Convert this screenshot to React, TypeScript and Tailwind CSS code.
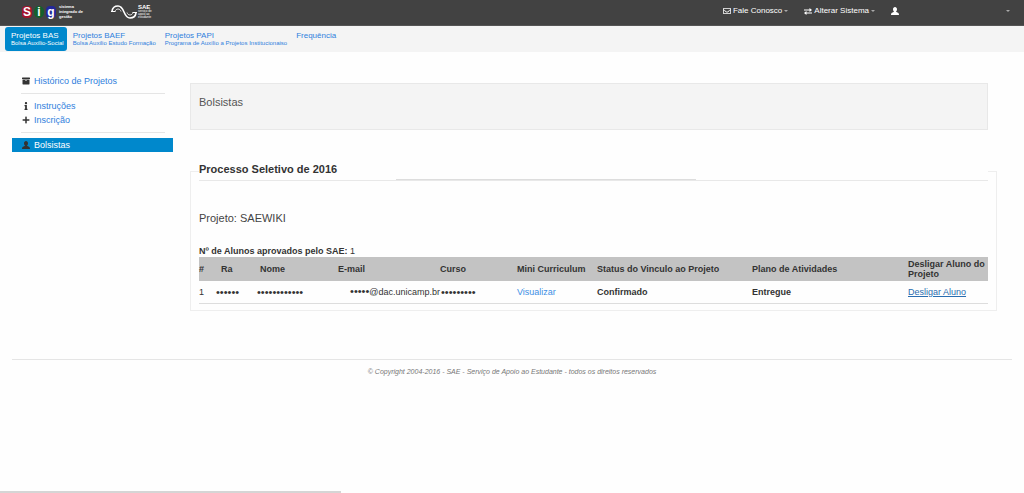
import type { ReactNode } from 'react';
import { FaArchive, FaInfo, FaPlus, FaRegEnvelope } from 'react-icons/fa';

const projetos = [
    { nome: 'Projetos BAS', detalhe: 'Bolsa Auxílio-Social', ativo: true },
    { nome: 'Projetos BAEF', detalhe: 'Bolsa Auxilio Estudo Formação' },
    { nome: 'Projetos PAPI', detalhe: 'Programa de Auxílio a Projetos Institucionaiso' },
    { nome: 'Frequência', detalhe: '' },
];

function LogoSig() {
    return (
        <a href="#" className="flex items-center gap-[3px]" aria-label="Sistema integrado de gestão">
            <span className="flex items-center gap-[2px] text-[12px] leading-[12px] font-bold">
                <span className="w-[10px] rounded-[4px] bg-[#a3152c] text-center">S</span>
                <span className="w-[10px] rounded-[5px] bg-[#14602c] text-center">i</span>
                <span className="w-[10px] rounded-[4px] bg-[#23289a] text-center">g</span>
            </span>
            <span className="text-[4px] leading-[5px] font-bold">
                sistema<br />integrado de<br />gestão
            </span>
        </a>
    );
}

function LogoSae() {
    return (
        <a href="#" className="flex items-center gap-px" aria-label="SAE">
            <svg viewBox="0 0 26 14" className="h-[14px] w-[26px]" fill="none" stroke="white">
                <path d="M1 6C1.500 3 4 1 7 1c7 0 5 12 12 12 3 0 5.500-2 6-5" strokeWidth="1.6" />
                <path d="M4 6.500c.5-1.500 1.500-2.500 3-2.500s2.500 1 3 2.500M16 7.500c.5 1.500 1.500 2.500 3 2.500s2.500-1 3-2.500" strokeWidth="0.8" />
                <path d="M0 6.500h4.500M21.500 7.500H26" strokeWidth="1" />
            </svg>
            <span className="text-[3px] leading-[3px]">
                <span className="block text-[6px] leading-[6px] font-bold">SAE</span>
                serviço de<br />apoio ao<br />estudante
            </span>
        </a>
    );
}

function IconeUsuario() {
    return (
        <svg viewBox="0 0 14 14" className="size-2" fill="currentColor">
            <path d="M7 0c2 0 3.500 1.600 3.500 4 0 1.800-.8 3.300-1.900 4 .3.900 1.200 1.200 2.600 1.600 1.700.5 2.800 1.400 2.800 4.400H0c0-3 1.100-3.900 2.800-4.400C4.200 9.200 5.100 8.900 5.400 8 4.300 7.300 3.500 5.800 3.500 4 3.500 1.600 5 0 7 0z" />
        </svg>
    );
}

function IconeTroca() {
    return (
        <svg viewBox="0 0 16 14" className="h-[7px] w-2" fill="currentColor">
            <path d="M0 3h11V0l5 4.200-5 4V5.200H0zM16 11.200H5V14L0 10l5-4v3h11z" />
        </svg>
    );
}

function ItemMenu({ icone, children }: { icone: ReactNode; children?: ReactNode }) {
    return (
        <button type="button" className="flex items-center gap-[2px] text-[8px] leading-[10px]">
            {icone}
            {children}
        </button>
    );
}

function Seta() {
    return (
        <svg viewBox="0 0 4 2" className="h-[2px] w-1 fill-[#aaaaaa]">
            <path d="M0 0h4L2 2z" />
        </svg>
    );
}

function LinkLateral({ icone, children, ativo }: { icone: ReactNode; children: ReactNode; ativo?: boolean }) {
    return (
        <a
            href="#"
            className={`flex h-[14px] items-center gap-1 pl-[10px] text-[9px] ${ativo ? 'bg-[#0088cc] text-white' : 'text-[#2f80dd]'}`}
        >
            <span className="flex w-2 justify-center text-[8px] text-[#333333]">{icone}</span>
            {children}
        </a>
    );
}

export default function App() {
    return (
        <div className="flex min-h-screen flex-col bg-[#fefefe] font-['Liberation_Sans',Arial,sans-serif] text-[9px] leading-[10px] text-[#333333]">
            <header className="flex h-[26px] items-start border-b border-[#555555] bg-[#424242] pt-1 pr-[14px] pl-[22px] text-white">
                <div className="flex items-center gap-7">
                    <LogoSig />
                    <LogoSae />
                </div>
                <div className="ml-auto flex h-[14px] items-center gap-4">
                    <ItemMenu icone={<FaRegEnvelope />}>Fale Conosco<Seta /></ItemMenu>
                    <ItemMenu icone={<IconeTroca />}>Alterar Sistema<Seta /></ItemMenu>
                    <button type="button" aria-label="Usuário" className="flex w-[119px] items-center justify-between">
                        <IconeUsuario />
                        <Seta />
                    </button>
                </div>
            </header>

            <nav className="flex h-[26px] items-start bg-[#f4f4f4] pt-px pl-[5px]">
                {projetos.map((p) => (
                    <a
                        key={p.nome}
                        href="#"
                        className={`h-6 rounded-[3px] pt-1 pr-[3px] pl-[6px] text-[8px] leading-[9px] whitespace-nowrap ${p.ativo ? 'bg-[#0088cc] text-white' : 'text-[#2f80dd]'}`}
                    >
                        {p.nome}
                        <small className="block text-[6px] leading-[6px]">{p.detalhe}</small>
                    </a>
                ))}
            </nav>

            <div className="flex pr-7 pl-3">
                <aside className="w-[161px] shrink-0 pt-[22px]">
                    <LinkLateral icone={<FaArchive />}>Histórico de Projetos</LinkLateral>
                    <hr className="mt-[5px] mr-2 mb-[5px] ml-[9px] border-[#e5e5e5]" />
                    <LinkLateral icone={<FaInfo />}>Instruções</LinkLateral>
                    <LinkLateral icone={<FaPlus />}>Inscrição</LinkLateral>
                    <hr className="mt-[5px] mr-2 mb-[5px] ml-[9px] border-[#e5e5e5]" />
                    <LinkLateral icone={<IconeUsuario />} ativo>Bolsistas</LinkLateral>
                </aside>

                <main className="ml-[17px] min-w-0 flex-1 pt-[31px]">
                    <h1 className="mr-2 h-[47px] border border-[#e8e8e8] bg-[#f4f4f4] pt-[11px] pl-2 text-[11px] leading-[14px] text-[#555555]">
                        Bolsistas
                    </h1>

                    <fieldset className="mt-8 border border-[#eeeeee] px-2 pb-[6px]">
                        <legend className="w-full border-b border-[#e8e8e8] text-[11px] leading-[14px] font-bold">
                            Processo Seletivo de 2016
                            <span className="mt-[3px] ml-[25%] block h-px w-[38%] bg-[#dddddd]" />
                        </legend>
                        <h2 className="mt-[30px] text-[11px] leading-[14px] text-[#444444]">Projeto: SAEWIKI</h2>
                        <p className="mt-[21px] h-[11px]"><b>Nº de Alunos aprovados pelo SAE:</b> 1</p>

                        <table className="w-full table-fixed border-b border-[#dddddd] text-left">
                            <colgroup>
                                <col className="w-[17px]" />
                                <col className="w-[41px]" />
                                <col className="w-[81px]" />
                                <col className="w-[102px]" />
                                <col className="w-[77px]" />
                                <col className="w-[80px]" />
                                <col className="w-[155px]" />
                                <col className="w-[156px]" />
                                <col className="w-[80px]" />
                            </colgroup>
                            <thead>
                                <tr className="h-6 bg-[#c3c3c3]">
                                    <th>#</th>
                                    <th className="pl-[5px]">Ra</th>
                                    <th className="pl-[3px]">Nome</th>
                                    <th>E-mail</th>
                                    <th>Curso</th>
                                    <th>Mini Curriculum</th>
                                    <th>Status do Vinculo ao Projeto</th>
                                    <th>Plano de Atividades</th>
                                    <th>Desligar Aluno do Projeto</th>
                                </tr>
                            </thead>
                            <tbody>
                                <tr className="h-[22px] whitespace-nowrap">
                                    <td>1</td>
                                    <td className="text-[11px]">••••••</td>
                                    <td className="text-[11px]">••••••••••••</td>
                                    <td className="text-right"><span className="text-[11px]">•••••</span>@dac.unicamp.br</td>
                                    <td className="pl-px text-[11px]">•••••••••</td>
                                    <td><a href="#" className="text-[#3d8fe5]">Visualizar</a></td>
                                    <td className="font-bold">Confirmado</td>
                                    <td className="font-bold">Entregue</td>
                                    <td><a href="#" className="text-[#2a6db0] underline">Desligar Aluno</a></td>
                                </tr>
                            </tbody>
                        </table>
                    </fieldset>
                </main>
            </div>

            <footer className="mx-3 mt-12 border-t border-[#e5e5e5] pt-[7px] text-center text-[7px] text-[#777777] italic">
                © Copyright 2004-2016 - SAE - Serviço de Apoio ao Estudante - todos os direitos reservados
            </footer>

            <div className="mt-auto h-[2px] w-1/3 bg-[#d5d5d5]" />
        </div>
    );
}
